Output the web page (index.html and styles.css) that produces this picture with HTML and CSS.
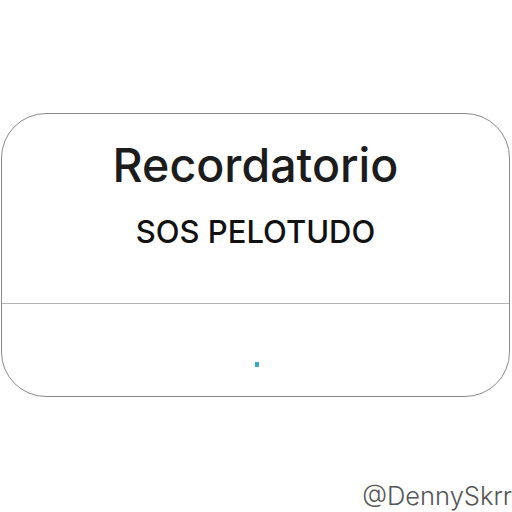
FILE: index.html
```html
<!DOCTYPE html>
<html>
<head>
<meta charset="utf-8">
<link rel="stylesheet" href="styles.css">
</head>
<body>
<div class="page">
  <div class="alert">
    <div class="alert-body">
      <div class="title">Recordatorio</div>
      <div class="message">SOS PELOTUDO</div>
    </div>
    <div class="alert-actions">
      <span class="dot"></span>
    </div>
  </div>
  <div class="credit">@DennySkrr</div>
</div>
</body>
</html>
```
FILE: styles.css
```css
html, body {
  margin: 0;
  padding: 0;
  background: #ffffff;
}
.page {
  width: 512px;
  height: 512px;
  position: relative;
  overflow: hidden;
  font-family: Inter, "Liberation Sans", sans-serif;
  padding-top: 113px;
  box-sizing: border-box;
}
.alert {
  margin-left: 1px;
  width: 509px;
  height: 284px;
  box-sizing: border-box;
  border: 1.5px solid #8a8a8a;
  border-radius: 45px;
  display: flex;
  flex-direction: column;
}
.alert-body {
  height: 189px;
  border-bottom: 1px solid #b4b4b4;
  display: flex;
  flex-direction: column;
  align-items: center;
}
.title {
  margin-top: 25px;
  font-size: 46.5px;
  font-weight: 500;
  line-height: 52px;
  color: #1c1c1c;
}
.message {
  margin-top: 24px;
  font-size: 31px;
  font-weight: 500;
  line-height: 34px;
  color: #111111;
}
.alert-actions {
  flex: 1;
  display: flex;
  justify-content: center;
  padding-top: 58px;
}
.dot {
  width: 4px;
  height: 5px;
  background: #38a9c7;
  margin-left: 2px;
}
.credit {
  position: absolute;
  right: 0;
  bottom: 1px;
  font-size: 25.5px;
  font-weight: 300;
  color: #555555;
  white-space: nowrap;
}
```
